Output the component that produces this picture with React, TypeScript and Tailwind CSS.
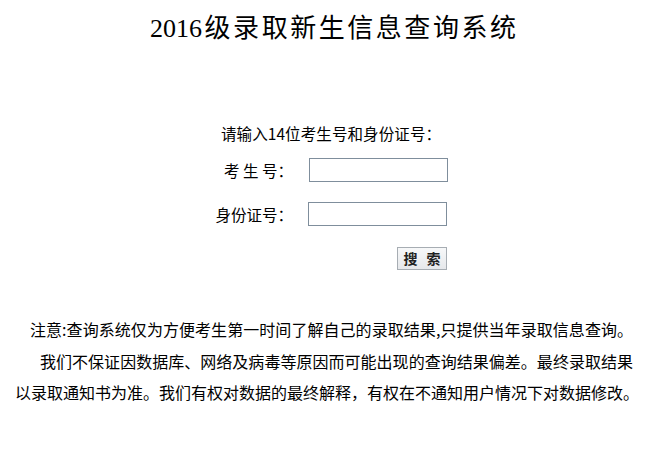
import React from "react";

const cjk = { fontFamily: '"Noto Sans CJK SC", "Noto Sans", sans-serif' };
const titleFont = { fontFamily: '"Liberation Serif", "Noto Sans CJK SC", serif' };

export default function App() {
  return (
    <div className="w-[649px] h-[450px] bg-white text-black overflow-hidden" style={cjk}>
      <h1
        className="pt-[15px] ml-[150px] w-[366px] whitespace-nowrap text-justify [text-align-last:justify] text-[26px] leading-[27px] font-normal"
        style={titleFont}
      >
        2016级录取新生信息查询系统
      </h1>

      <div className="mt-[81px] ml-[221px] w-[220px] whitespace-nowrap text-justify [text-align-last:justify] text-[15.5px] leading-[20px]">
        请输入14位考生号和身份证号：
      </div>

      <div className="mt-[15px] grid grid-cols-[293px_140px] gap-x-[15px] gap-y-[20px] items-center text-[15.5px] leading-[20px]">
        <div className="text-right">考 生 号：</div>
        <input
          type="text"
          className="ml-[1px] w-[139px] h-[24px] border border-[#7f8e9c] bg-white outline-none"
        />
        <div className="text-right">身份证号：</div>
        <input
          type="text"
          className="w-[139px] h-[24px] border border-[#7f8e9c] bg-white outline-none"
        />
      </div>

      <div className="mt-[19px] pl-[397px]">
        <button className="w-[50px] h-[23px] border border-[#a7adb3] bg-gradient-to-b from-[#f7f8f9] to-[#e6e8eb] text-[14px] leading-[21px] font-bold text-[#222] tracking-[3px] pl-[3px]">
          搜 索
        </button>
      </div>

      <div className="mt-[44px] flex flex-col text-[16px] leading-[31.5px] whitespace-nowrap">
        <div className="ml-[30px] w-[603px] text-justify [text-align-last:justify]">
          注意:查询系统仅为方便考生第一时间了解自己的录取结果,只提供当年录取信息查询。
        </div>
        <div className="ml-[40px] w-[593px] text-justify [text-align-last:justify]">
          我们不保证因数据库、网络及病毒等原因而可能出现的查询结果偏差。最终录取结果
        </div>
        <div className="ml-[15px] w-[618px] text-justify [text-align-last:justify]">
          以录取通知书为准。我们有权对数据的最终解释，有权在不通知用户情况下对数据修改。
        </div>
      </div>
    </div>
  );
}
